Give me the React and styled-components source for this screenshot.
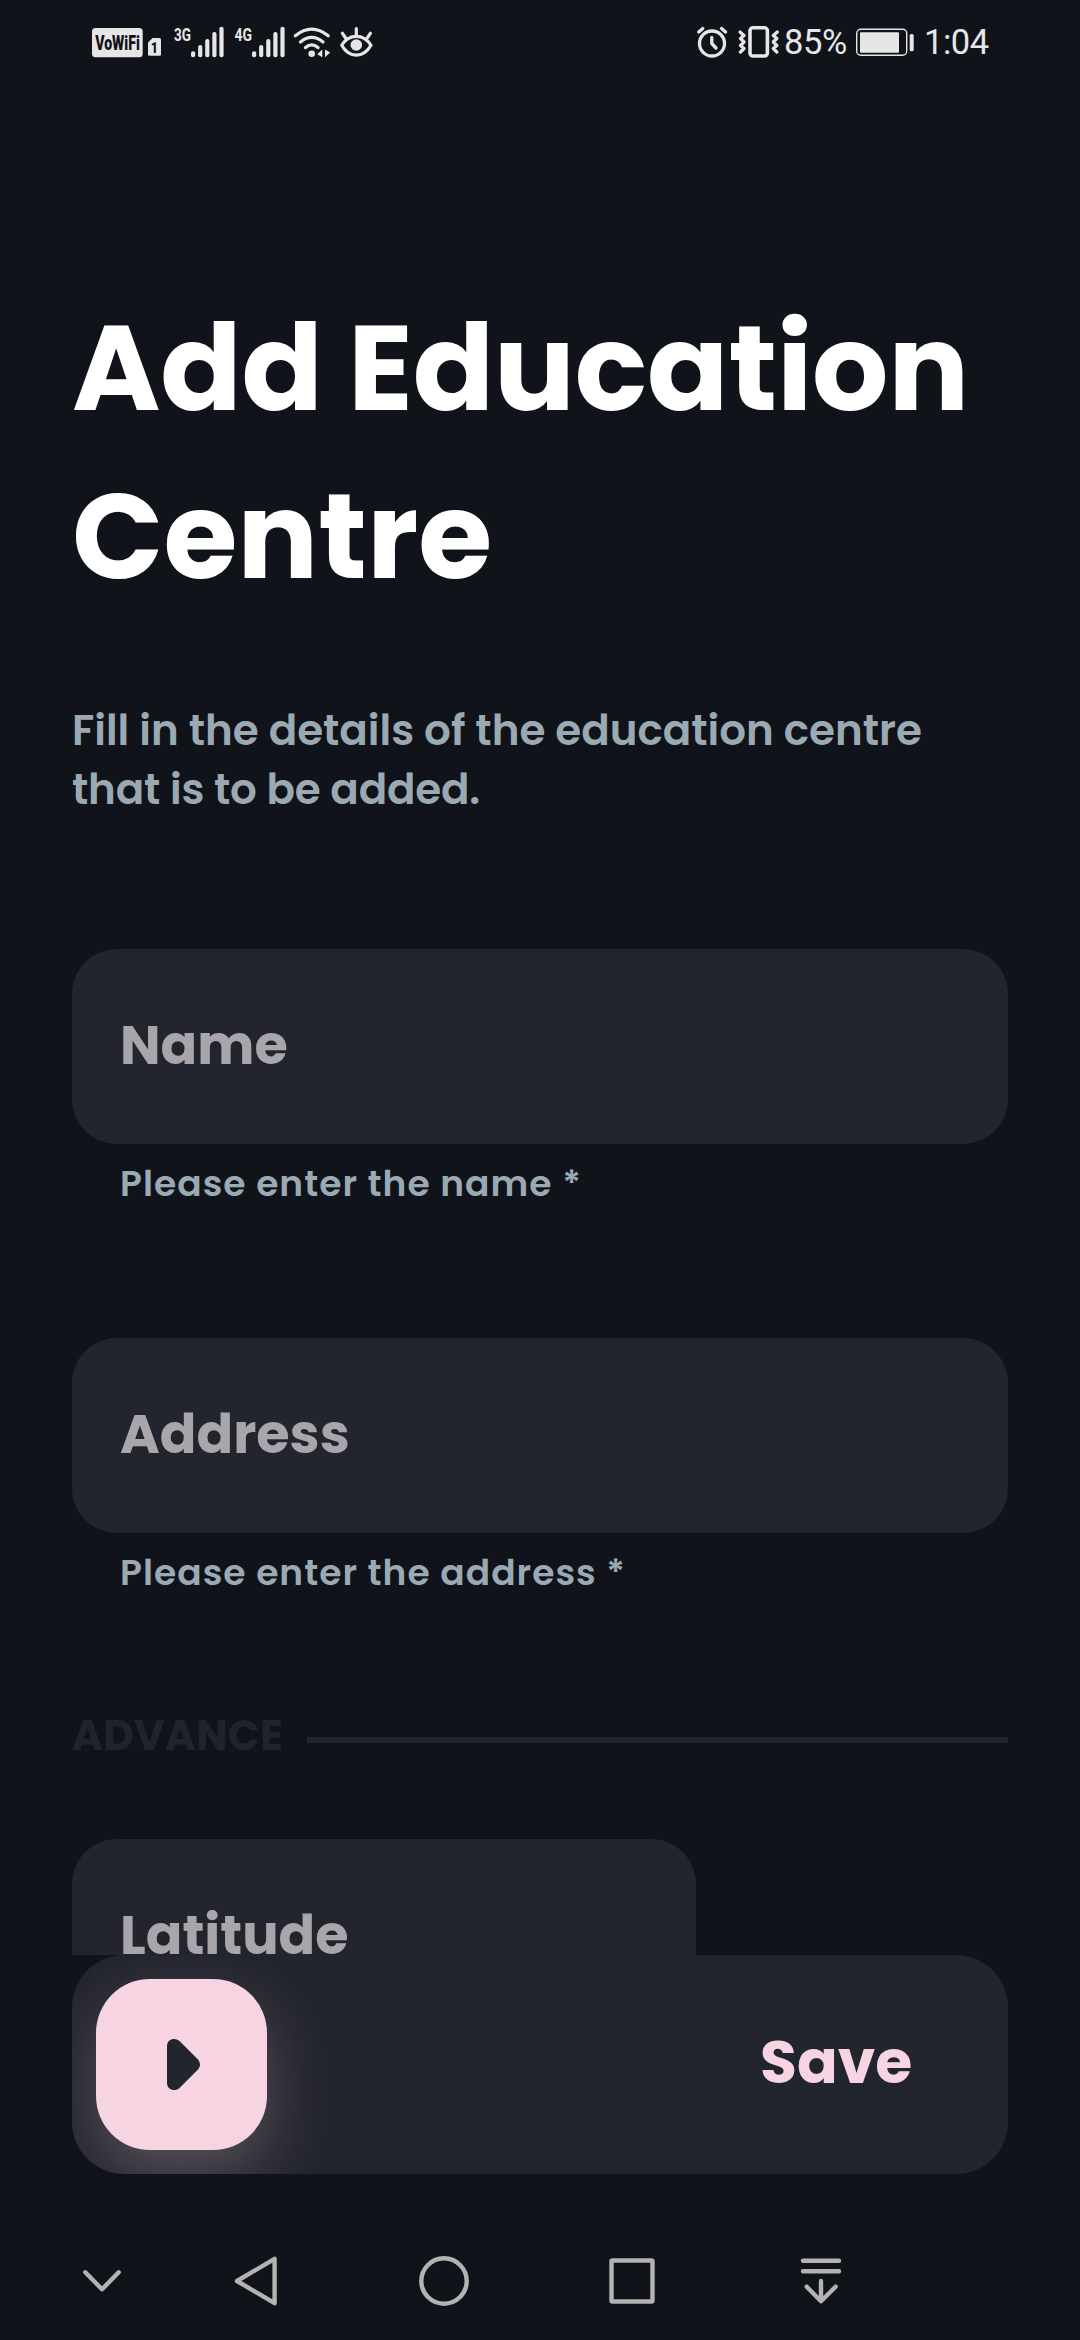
import React from "react";
import styled, { createGlobalStyle } from "styled-components";

const c = {
  bg: "#10131a",
  panel: "#23252e",
  pink: "#f6d4e1",
  label: "#a8a6ab",
  muted: "#9aa9b2",
  status: "#e6e6e6",
  nav: "#b3b3b3",
};

const Global = createGlobalStyle`
  * { box-sizing: border-box; }
  body { margin: 0; background: ${c.bg}; }
`;

const Screen = styled.div`
  width: 1080px;
  height: 2340px;
  display: flex;
  flex-direction: column;
  overflow: hidden;
  background: ${c.bg};
  font-family: Poppins, Inter, "Liberation Sans", sans-serif;
`;

const StatusBar = styled.header`
  flex: none;
  height: 84px;
  padding: 0 93px 0 90px;
  display: flex;
  justify-content: space-between;
  align-items: flex-start;
`;

const StatusGroup = styled.div`
  display: flex;
  align-items: flex-start;
`;

const StatusText = styled.span`
  width: ${(p) => p.$w}px;
  margin-left: ${(p) => p.$ml}px;
  padding-top: 22px;
  font: 400 34.5px/41px Roboto, sans-serif;
  letter-spacing: ${(p) => p.$ls}px;
  white-space: nowrap;
  color: ${c.status};
`;

const Content = styled.main`
  flex: none;
  height: 1871px;
  padding: 200px 72px 0;
  overflow: hidden;
`;

const Title = styled.h1`
  margin: 0;
  font-size: 120px;
  line-height: 168px;
  font-weight: 700;
  color: #fff;
  white-space: nowrap;
`;

const Line = styled.span`
  display: block;
  letter-spacing: ${(p) => p.$ls || 0}px;
`;

const Subtitle = styled.p`
  margin: 81px 0 130px;
  font-size: 42px;
  line-height: 59px;
  font-weight: 600;
  color: ${c.muted};
  white-space: nowrap;
`;

const FieldGroup = styled.div`
  margin-bottom: ${(p) => p.$mb}px;
`;

const Field = styled.div`
  width: ${(p) => p.$w || 936}px;
  height: 195px;
  padding: 0 48px 3px;
  display: flex;
  align-items: center;
  border-radius: 45px;
  background: ${c.panel};
  color: ${c.label};
  font-size: 54px;
  font-weight: 700;
  line-height: 70px;
`;

const Helper = styled.div`
  margin-top: 15px;
  padding-left: 48px;
  font-size: 36px;
  line-height: 50px;
  font-weight: 600;
  letter-spacing: 1.03px;
  color: ${c.muted};
  white-space: nowrap;
`;

const Section = styled.div`
  display: flex;
  align-items: center;
  height: 60px;
  margin-bottom: 74px;
`;

const SectionLabel = styled.span`
  width: 235px;
  padding-top: 1px;
  font-size: 42px;
  font-weight: 700;
  line-height: 60px;
  letter-spacing: 0.2px;
  color: #20232b;
`;

const Rule = styled.div`
  flex: 1;
  height: 6px;
  margin-top: 10px;
  background: ${c.panel};
`;

const SlideBar = styled.section`
  flex: none;
  height: 219px;
  margin: 0 72px;
  padding: 0 96px 0 24px;
  display: flex;
  align-items: center;
  justify-content: space-between;
  border-radius: 52px;
  overflow: hidden;
  background: ${c.panel};
`;

const Thumb = styled.div`
  width: 171px;
  height: 171px;
  padding-left: 4px;
  display: flex;
  align-items: center;
  justify-content: center;
  border-radius: 54px;
  background: ${c.pink};
  box-shadow: 0 27px 66px rgba(246, 212, 225, 0.25);
`;

const SaveLabel = styled.span`
  width: 152px;
  padding-bottom: 5px;
  font-size: 60px;
  line-height: 80px;
  font-weight: 700;
  white-space: nowrap;
  color: ${c.pink};
`;

const NavBar = styled.nav`
  flex: 1;
  padding: 77px 0 0 72px;
  display: grid;
  grid-template-columns: 154px 188px 188px 189px 60px;
  align-items: start;
`;

const Svg = styled.svg`
  display: block;
  flex: none;
  overflow: visible;
`;

const bars = [51.3, 45, 39, 32, 26.7];

function Signal({ x, label, textX, width }) {
  return (
    <g>
      <text x={textX} y="40.7" fontFamily="Roboto" fontWeight="700" fontSize="18.6" textLength={width} lengthAdjust="spacingAndGlyphs" fill={c.status}>
        {label}
      </text>
      {bars.map((top, i) => (
        <rect key={top} x={x + i * 7.1} y={top} width="4.2" height={57.3 - top} rx="2" fill={c.status} />
      ))}
    </g>
  );
}

function LeftStatus() {
  return (
    <Svg width="290" height="84" viewBox="90 0 290 84">
      <rect x="92" y="28" width="50.7" height="29.3" rx="3.5" fill={c.status} />
      <text transform="translate(95.2 49.5) scale(0.73 1)" fontFamily="Roboto" fontWeight="900" fontSize="19.3" fill={c.bg}>
        VoWiFi
      </text>
      <path d="M152.5 38H159.5Q161 38 161 39.5V54.2Q161 55.7 159.5 55.7H149.5Q148 55.7 148 54.2V42.5Z" fill={c.status} />
      <text transform="translate(150.8 53) scale(0.8 1)" fontFamily="Roboto" fontWeight="900" fontSize="15.5" fill={c.bg}>
        1
      </text>
      <Signal x={191} label="3G" textX={174} width={17} />
      <Signal x={252} label="4G" textX={234.5} width={17.5} />
      <g fill="none" stroke={c.status} strokeWidth="3.3" strokeLinecap="round">
        <path d="M295.3 35.8Q311.7 22.5 328.2 35.8" />
        <path d="M300.5 42Q311.7 32.7 323 42" />
        <path d="M305.5 47.6Q311.7 42.2 318 47.6" />
      </g>
      <circle cx="311.7" cy="53.7" r="3.3" fill={c.status} />
      <path d="M322.3 49.5V57.3L317.2 54.3ZM325 49.5V57.3L330.2 52.5Z" fill={c.status} />
      <g fill="none" stroke={c.status} strokeWidth="3.2" strokeLinecap="round" strokeLinejoin="round">
        <path d="M341.7 45.3C349 33.5 363.6 33.5 371 45.3C363.6 58.3 349 58.3 341.7 45.3Z" />
        <path d="M356.3 28.7V35M342.3 33.2L345.6 38M370.5 33.2L367.2 38" />
      </g>
      <circle cx="356.3" cy="45" r="5.8" fill={c.status} />
    </Svg>
  );
}

function AlarmAndVibrate() {
  return (
    <Svg width="86" height="84" viewBox="695 0 86 84">
      <g fill="none" stroke={c.status} strokeLinecap="round" strokeLinejoin="round">
        <circle cx="712" cy="43.5" r="12.5" strokeWidth="3.3" />
        <path d="M711.8 37.5V43.5L716 48" strokeWidth="3.3" />
        <path d="M698.7 32L702.8 28.4M725.6 32L721.5 28.4" strokeWidth="3.3" />
        <rect x="750" y="27.8" width="17.4" height="28.2" rx="3" strokeWidth="3.6" />
        <path
          d="M740 32L744 35.5L740.5 38.5L744 42L740.5 45.5L744 48.5L740.5 52M777.3 32L773.3 35.5L776.8 38.5L773.3 42L776.8 45.5L773.3 48.5L776.8 52"
          strokeWidth="3.2"
        />
      </g>
    </Svg>
  );
}

function Battery() {
  return (
    <Svg width="60" height="84" viewBox="855 0 60 84">
      <rect x="856.7" y="29.3" width="50" height="26" rx="4" fill="none" stroke={c.status} strokeWidth="1.4" />
      <rect x="860" y="32.3" width="39" height="20.4" rx="1" fill={c.status} />
      <rect x="909.7" y="34" width="4" height="17.3" rx="1.5" fill={c.status} />
    </Svg>
  );
}

const NavIcon = ({ children }) => (
  <Svg width="60" height="60" viewBox="-30 -30 60 60" fill="none" stroke={c.nav} strokeWidth="4.4" strokeLinecap="round" strokeLinejoin="round">
    {children}
  </Svg>
);

export default function App() {
  return (
    <Screen>
      <Global />
      <StatusBar>
        <LeftStatus />
        <StatusGroup>
          <AlarmAndVibrate />
          <StatusText $w={71} $ml={3} $ls={-0.4}>85%</StatusText>
          <Battery />
          <StatusText $w={63} $ml={9} $ls={-0.5}>1:04</StatusText>
        </StatusGroup>
      </StatusBar>
      <Content>
        <Title>
          <Line $ls={-0.2}>Add Education</Line>
          <Line>Centre</Line>
        </Title>
        <Subtitle>
          <Line>Fill in the details of the education centre</Line>
          <Line $ls={-0.18}>that is to be added.</Line>
        </Subtitle>
        <FieldGroup $mb={129}>
          <Field>Name</Field>
          <Helper>Please enter the name *</Helper>
        </FieldGroup>
        <FieldGroup $mb={107}>
          <Field>Address</Field>
          <Helper>Please enter the address *</Helper>
        </FieldGroup>
        <Section>
          <SectionLabel>ADVANCE</SectionLabel>
          <Rule />
        </Section>
        <Field $w={624}>Latitude</Field>
      </Content>
      <SlideBar>
        <Thumb>
          <Svg width="33" height="51" viewBox="0 0 33 51">
            <path d="M0 7C0 0 8 -2 12.5 2L31 20.5Q35 25.5 31 30.5L12.5 49C8 53 0 51 0 44Z" fill={c.panel} />
          </Svg>
        </Thumb>
        <SaveLabel>Save</SaveLabel>
      </SlideBar>
      <NavBar>
        <NavIcon><path d="M-16.7 -8.7L0 8.3L16.7 -8.7" /></NavIcon>
        <NavIcon><path d="M18.6 -22.2V22.2L-19 0Z" /></NavIcon>
        <NavIcon><circle r="22.7" /></NavIcon>
        <NavIcon><rect x="-20.5" y="-20.5" width="41" height="41" rx="1" /></NavIcon>
        <NavIcon><path d="M-18 -20.3H18M-18 -9.7H18M0 0V20M-14.3 5.7L0 20.3L14.6 5.7" /></NavIcon>
      </NavBar>
    </Screen>
  );
}
